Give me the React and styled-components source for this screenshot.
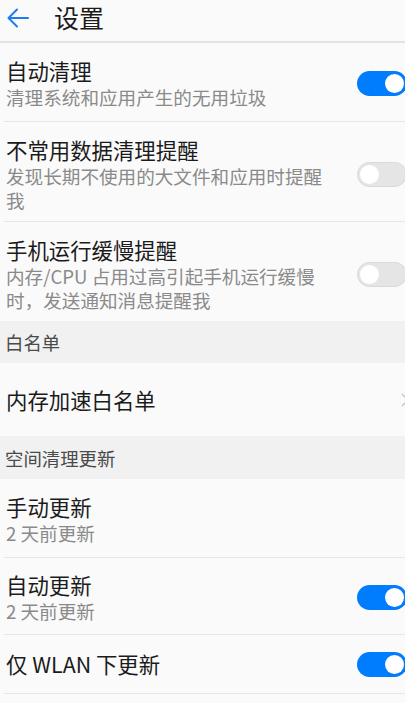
import React from 'react';
import styled, { createGlobalStyle } from 'styled-components';

const GlobalStyle = createGlobalStyle`
  html, body {
    margin: 0;
    padding: 0;
    background: #fafafa;
    overflow: hidden;
  }
  body {
    font-family: 'Noto Sans CJK SC', 'Noto Sans', sans-serif;
  }
`;

const Page = styled.div`
  width: 420px;
  min-height: 703px;
  background: #fafafa;
`;

const Header = styled.header`
  display: flex;
  align-items: center;
  height: 41px;
  border-bottom: 2px solid #e3e3e3;

  .back {
    display: flex;
    align-items: center;
    margin: -5px 0 0 6px;
    width: 24px;
    height: 24px;
  }

  h1 {
    margin: -7px 0 0 24px;
    font-size: 25px;
    font-weight: 400;
    color: #1b1b1b;
    line-height: 1;
  }
`;

const Row = styled.div`
  display: flex;
  align-items: center;
  margin-left: 4px;
  padding: ${(props) => props.$pad || '14px 13px 12px 2px'};
  min-height: ${(props) => props.$minHeight || 'auto'};
  box-sizing: border-box;
  border-bottom: ${(props) => (props.$last ? 'none' : '1px solid #e6e6e6')};
`;

const Texts = styled.div`
  flex: 1;
  min-width: 0;
`;

const TextBox = styled.div`
  width: 320px;
`;

const Title = styled.div`
  font-size: 21.4px;
  line-height: 28px;
  color: #1b1b1b;
  white-space: nowrap;
`;

const Sub = styled.div`
  font-size: 18.6px;
  line-height: 24px;
  color: #8a8a8a;
`;

const Section = styled.div`
  display: flex;
  align-items: center;
  height: ${(props) => props.$height || '42px'};
  padding-left: 5px;
  background: #f1f1f1;
  font-size: 18.4px;
  color: #4a4a4a;
`;

const Switch = styled.span`
  flex: none;
  position: relative;
  width: 50px;
  height: 25px;
  border-radius: 13px;
  box-sizing: border-box;
  background: ${(props) => (props.$on ? '#007dff' : '#e5e5e5')};
  border: ${(props) => (props.$on ? 'none' : '1px solid #d9d9d9')};

  &::after {
    content: '';
    position: absolute;
    top: ${(props) => (props.$on ? '3px' : '2px')};
    left: ${(props) => (props.$on ? '28px' : '2px')};
    width: 19px;
    height: 19px;
    border-radius: 50%;
    background: #ffffff;
  }
`;

const Chevron = styled.span`
  flex: none;
  display: flex;
  align-items: center;
  margin-right: -2px;
`;

function BackArrow() {
  return (
    <svg width="24" height="24" viewBox="0 0 24 24" fill="none">
      <path d="M22 12H3M11 3.5L2.5 12 11 20.5" stroke="#1a7df5" strokeWidth="2" strokeLinecap="round" strokeLinejoin="round" />
    </svg>
  );
}

function Item({ title, sub, on, chevron, pad, minHeight, last }) {
  return (
    <Row $pad={pad} $minHeight={minHeight} $last={last}>
      <Texts>
        <TextBox>
          <Title>{title}</Title>
          {sub && <Sub>{sub}</Sub>}
        </TextBox>
      </Texts>
      {on !== undefined && <Switch $on={on} />}
      {chevron && (
        <Chevron>
          <svg width="8" height="14" viewBox="0 0 8 14" fill="none">
            <path d="M1 1l6 6-6 6" stroke="#c4c4c4" strokeWidth="1.3" />
          </svg>
        </Chevron>
      )}
    </Row>
  );
}

export default function App() {
  return (
    <Page>
      <GlobalStyle />
      <Header>
        <span className="back"><BackArrow /></span>
        <h1>设置</h1>
      </Header>
      <Item title="自动清理" sub="清理系统和应用产生的无用垃圾" on={true} />
      <Item title="不常用数据清理提醒" sub="发现长期不使用的大文件和应用时提醒我" on={false} pad="14px 13px 9px 2px" />
      <Item title="手机运行缓慢提醒" sub="内存/CPU 占用过高引起手机运行缓慢时，发送通知消息提醒我" on={false} pad="14px 13px 9px 2px" last />
      <Section>白名单</Section>
      <Item title="内存加速白名单" chevron minHeight="73px" pad="0 13px 0 2px" last />
      <Section $height="43px">空间清理更新</Section>
      <Item title="手动更新" sub="2 天前更新" />
      <Item title="自动更新" sub="2 天前更新" on={true} pad="13px 13px 11px 2px" />
      <Item title="仅 WLAN 下更新" on={true} minHeight="59px" pad="0 13px 0 2px" />
    </Page>
  );
}
